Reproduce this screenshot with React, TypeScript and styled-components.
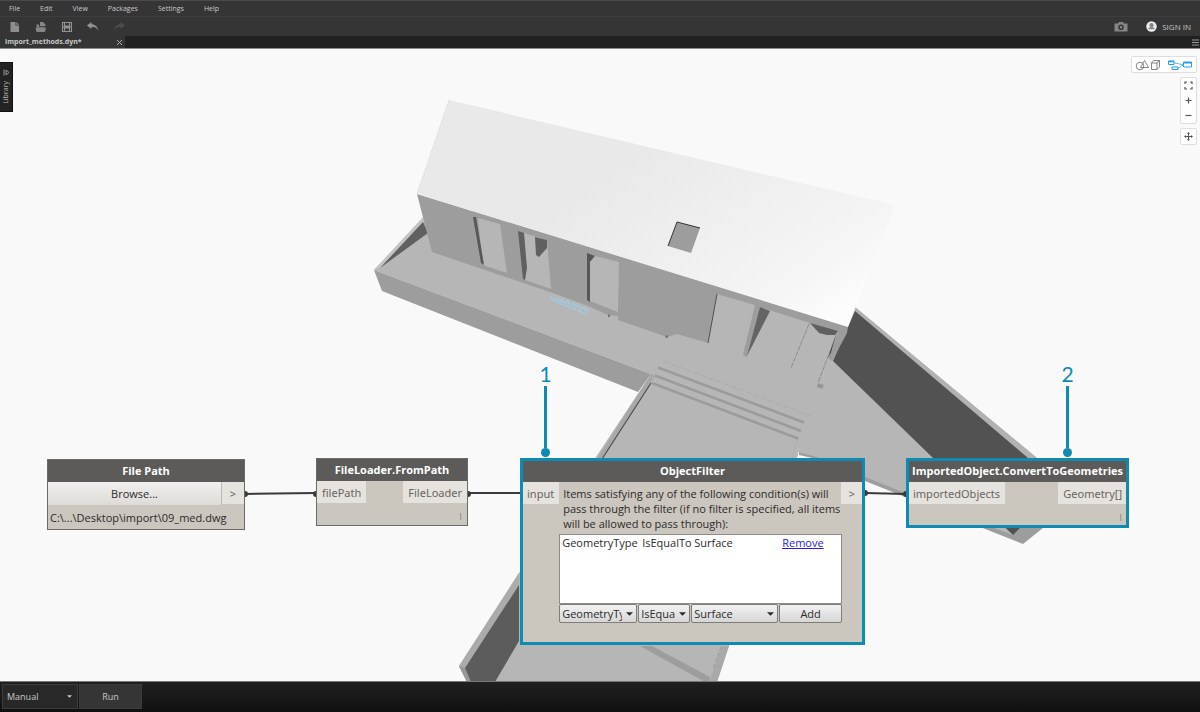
import React from "react";
import styled, { createGlobalStyle } from "styled-components";

const teal = "#0f8bb3";

const GlobalStyle = createGlobalStyle`
  * { box-sizing: border-box; }
  body { margin: 0; background: #f9f9f9; }
  button, input, select { font: inherit; color: inherit; margin: 0; }
`;

const Page = styled.div`
  display: flex;
  flex-direction: column;
  min-height: 100vh;
  font-family: "Open Sans", "Liberation Sans", sans-serif;
  font-size: 7px;
  color: #c8c8c8;
`;

const Header = styled.header`
  background: #353535;
  border-bottom: 1px solid #8b8b8b;
`;

const MenuBar = styled.nav`
  display: flex;
  align-items: center;
  gap: 20px;
  height: 16px;
  padding: 0 9px;
  border-top: 1px solid #4a4a4a;
`;

const MenuItem = styled.button`
  padding: 0;
  border: 0;
  background: none;
  line-height: 10px;
`;

const ToolBar = styled.div`
  display: flex;
  align-items: center;
  justify-content: space-between;
  height: 20px;
  padding: 0 9px;
  border-top: 1px solid #3d3d3d;
`;

const ToolGroup = styled.div<{ $gap: number }>`
  display: flex;
  align-items: center;
  gap: ${(p) => p.$gap}px;
`;

const ToolButton = styled.button`
  display: flex;
  align-items: center;
  gap: 5px;
  padding: 0;
  border: 0;
  background: none;
  font-size: 8px;
  line-height: 10px;
  svg { display: block; }
`;

const TabBar = styled.div`
  display: flex;
  align-items: center;
  justify-content: space-between;
  height: 12px;
  padding-right: 1px;
  background: #212121;
`;

const Tab = styled.div`
  display: flex;
  align-items: center;
  justify-content: space-between;
  width: 125px;
  height: 12px;
  padding: 0 2px 0 5px;
  background: #353535;
  font-weight: 700;
  line-height: 14px;
`;

const Canvas = styled.main`
  position: relative;
  flex: 1;
  min-height: 632px;
  overflow: hidden;
  background: #f9f9f9;
`;

const Scene = styled.svg`
  position: absolute;
  left: 0;
  top: 0;
  display: block;
`;

const LibraryTab = styled.button`
  position: absolute;
  left: 0;
  top: 13px;
  display: flex;
  flex-direction: column;
  align-items: center;
  gap: 5px;
  width: 13px;
  height: 50px;
  padding: 6px 0 0;
  border: 1px solid #111;
  border-left: 0;
  background: #232323;
  color: #b4b4b4;
  svg { display: block; }
`;

const LibraryLabel = styled.span`
  writing-mode: vertical-rl;
  transform: rotate(180deg);
  line-height: 10px;
`;

const ViewControls = styled.div`
  position: absolute;
  right: 3px;
  top: 7px;
  display: flex;
  flex-direction: column;
  align-items: flex-end;
  gap: 4px;
`;

const ControlGroup = styled.div<{ $vertical?: boolean }>`
  display: flex;
  flex-direction: ${(p) => (p.$vertical ? "column" : "row")};
  border: 1px solid #dedede;
  border-radius: 2px;
  background: #fff;
`;

const ControlButton = styled.button<{ $wide?: boolean }>`
  display: grid;
  place-items: center;
  width: ${(p) => (p.$wide ? 32 : 15)}px;
  height: 15px;
  padding: 0;
  border: 0;
  background: none;
  & + & { border-left: ${(p) => (p.$wide ? "1px solid #dedede" : "0")}; }
  svg { display: block; }
`;

const Node = styled.section<{ $x: number; $y: number; $w: number; $h: number; $selected?: boolean }>`
  position: absolute;
  left: ${(p) => p.$x}px;
  top: ${(p) => p.$y}px;
  width: ${(p) => p.$w}px;
  height: ${(p) => p.$h}px;
  border: ${(p) => (p.$selected ? `2px solid ${teal}` : "1px solid #6b6a67")};
  outline: ${(p) => (p.$selected ? `1px solid ${teal}` : "none")};
  outline-offset: -3px;
  background: #cbc6be;
  color: #2b2b2b;
  font-size: 11px;
  line-height: 15px;
`;

const NodeTitle = styled.h2`
  margin: 0;
  height: 22px;
  background: #5d5b59;
  color: #fff;
  font-size: 11px;
  font-weight: 700;
  line-height: 22px;
  text-align: center;
  white-space: nowrap;
`;

const PortRow = styled.div`
  display: flex;
  justify-content: space-between;
  align-items: flex-start;
`;

const Port = styled.div`
  height: 22px;
  padding: 0 5px;
  background: #e6e2de;
  color: #676562;
  font-family: "Noto Sans", sans-serif;
  line-height: 23px;
`;

const OutPort = styled(Port)`
  width: 22px;
  padding: 0;
  text-align: center;
`;

const Browse = styled.button`
  flex: 1;
  height: 23px;
  padding: 0;
  border: 0;
  border-right: 1px solid #bdb8b1;
  background: linear-gradient(#f1f0ef, #dedbd7);
  line-height: 20px;
`;

const FileName = styled.div`
  padding: 5px 2px;
`;

const Lacing = styled.div`
  padding: 4px 4px 0;
  color: #676562;
  font-size: 8px;
  text-align: right;
`;

const FilterBody = styled.div`
  flex: 1;
  padding-top: 4px;
`;

const Hint = styled.p`
  margin: 0 0 3px 4px;
  white-space: nowrap;
`;

const Conditions = styled.ul`
  height: 70px;
  margin: 0 -1px 0 0;
  padding: 0 2px;
  border: 1px solid #8e8c89;
  background: #fff;
  list-style: none;
`;

const Condition = styled.li`
  display: grid;
  grid-template-columns: 80px 52px 88px auto;
`;

const RemoveLink = styled.a`
  color: #2a17e8;
`;

const FilterForm = styled.form`
  display: flex;
  gap: 1px;
  margin-right: -1px;
`;

const Field = styled.label<{ $w: number }>`
  display: grid;
  width: ${(p) => p.$w}px;
  align-items: center;
  > * { grid-area: 1 / 1; }
  svg { justify-self: end; margin-right: 4px; pointer-events: none; }
`;

const FilterSelect = styled.select`
  appearance: none;
  width: 100%;
  height: 19px;
  padding: 0 14px 0 2px;
  border: 1px solid #7f7d7a;
  border-radius: 2px;
  background: linear-gradient(#f3f3f3, #d6d6d6);
  text-overflow: clip;
`;

const AddButton = styled.button`
  flex: 1;
  height: 19px;
  padding: 0;
  border: 1px solid #7f7d7a;
  border-radius: 2px;
  background: linear-gradient(#f3f3f3, #d6d6d6);
`;

const Callout = styled.div<{ $x: number }>`
  position: absolute;
  left: ${(p) => p.$x}px;
  top: 313px;
  display: flex;
  flex-direction: column;
  align-items: center;
  width: 21px;
  color: ${teal};
  font-family: Lato, sans-serif;
  font-size: 21px;
  line-height: 24px;
  &::after {
    content: "";
    width: 9px;
    height: 9px;
    border-radius: 50%;
    background: ${teal};
  }
`;

const Stem = styled.span`
  width: 3px;
  height: 62px;
  background: ${teal};
`;

const Footer = styled.footer`
  display: flex;
  gap: 1px;
  height: 31px;
  padding: 2px 2px 3px;
  border-top: 1px solid #777;
  background: linear-gradient(#202020, #101010);
  font-size: 9px;
`;

const RunMode = styled.label`
  display: grid;
  align-items: center;
  width: 76px;
  > * { grid-area: 1 / 1; }
  svg { justify-self: end; margin-right: 6px; pointer-events: none; }
`;

const RunSelect = styled.select`
  appearance: none;
  width: 100%;
  height: 100%;
  padding: 0 4px;
  border: 1px solid #3c3c3c;
  background: #282828;
`;

const RunButton = styled.button`
  width: 63px;
  padding: 0;
  border: 1px solid #3c3c3c;
  background: #353535;
`;

const Caret = ({ size }: { size: number }) => (
  <svg width={size} height={Math.ceil(size / 2)} viewBox="0 0 8 4" aria-hidden="true">
    <path d="M0 0H8L4 4Z" fill="currentColor" />
  </svg>
);

const House = () => (
  <Scene width="1200" height="633" viewBox="0 49 1200 633" aria-hidden="true">
    <defs>
      <linearGradient id="roof" gradientUnits="userSpaceOnUse" x1="600" y1="180" x2="740" y2="380">
        <stop offset="0" stopColor="#e9e9e9" />
        <stop offset="0.4" stopColor="#efefef" />
        <stop offset="0.8" stopColor="#f5f5f5" />
        <stop offset="1" stopColor="#fcfcfc" />
      </linearGradient>
    </defs>
    {/* ground slab */}
    <path d="M423 218L374 270L651 374L519 573L459 666L467 682H717L729 646L799 452L983 528L1023 543L1080 493L1037 458L855 307L700 290L432 233Z" fill="#b6b6b6" />
    <path d="M374 270L382 291L638 392L651 374Z" fill="#9d9d9d" />
    <path d="M423 217L374 270L380 268L424 222Z" fill="#c4c4c4" />
    <path d="M423 222L380 268L428 233Z" fill="#606060" />
    <path d="M799 452L865 477L983 524L1013 535L1060 487L1084 495L1023 544L983 528L865 481Z" fill="#9d9d9d" />
    <path d="M798 452L799 458H816Z" fill="#f9f9f9" />
    <path d="M799 452L820 458H812L799 455Z" fill="#9d9d9d" />
    {/* retaining wall */}
    <path d="M855 307L1037 458L1080 493L1060 487L855 312Z" fill="#b2b2b2" />
    <path d="M855 311L1028 458L1060 487L1013 535L933 458L833 361Z" fill="#525252" />
    {/* lower terrace */}
    <path d="M519 573L459 666L467 682H471L465 668L519 585Z" fill="#ababab" />
    <path d="M459 666L467 682H471L465 668Z" fill="#979797" />
    <path d="M519 585L465 668L471 682H495L519 641Z" fill="#5c5c5c" />
    <path d="M640 646H652L710 677L709 682H705Z" fill="#9d9d9d" />
    <path d="M729 646L717 682H709L722 646Z" fill="#a9a9a9" />
    <path d="M721 647L713 669" stroke="#888" strokeWidth="0.6" strokeDasharray="4 2" />
    {/* stairs */}
    <path d="M651 374L597 459H602L655 376Z" fill="#a8a8a8" />
    <path d="M651 383L602 459" stroke="#4d4d4d" strokeWidth="1.2" />
    <path d="M658 367.500L804 422.500M655 375.500L801 431M652 383L798 438.500" stroke="#9b9b9b" strokeWidth="2.500" />
    <path d="M663 361L811 416M798 439L792 458" stroke="#a5a5a5" strokeWidth="0.6" strokeDasharray="6 2" fill="none" />
    {/* facade */}
    <path d="M417 194L432 252L550 292L588 306L608 315L618 316V320L667 337L677 334L708 343L717 294L755 305L743 355L747 357L760 307L810 323L838 332L828 358L832 361L847 333L848 326Z" fill="#9d9d9d" />
    <path d="M717 294L708 343" stroke="#505050" strokeWidth="1" />
    <path d="M760 307L770 311L747 356Z" fill="#646464" />
    <path d="M810 323L838 331L835 335L827 335L819 333Z" fill="#606060" />
    <path d="M837 331L831 352L828 358L836 334Z" fill="#222" />
    <path d="M809 324L791 368M835 338L818 383" stroke="#7a7a7a" strokeWidth="0.7" strokeDasharray="5 1" fill="none" />
    <path d="M818 383L824 385L822 389L817 387Z" fill="#969696" />
    <path d="M608 314L610 315V317H608ZM665 336L668 335V338H666Z" fill="#777" />
    {/* openings */}
    <path d="M478 218L500 224L507 273L483 265Z" fill="#b6b6b6" />
    <path d="M473 217L476 217L484 265L481 263Z" fill="#575757" />
    <path d="M524 233L547 240L551 289L525 280Z" fill="#b6b6b6" />
    <path d="M518 231L524 233L527 268L525 280L523 279Z" fill="#606060" />
    <path d="M535 237L547 240V248L539 257L536 255Z" fill="#606060" />
    <path d="M587 253L595 256L590 262V302L587 300Z" fill="#575757" />
    <path d="M595 256L619 262L618 312L590 301V262Z" fill="#b6b6b6" />
    {/* roof */}
    <path d="M449 100L895 205L848 327L417 194Z" fill="url(#roof)" />
    <path d="M449 100L417 194" stroke="#d8d8d8" strokeWidth="0.8" strokeDasharray="3 1" />
    <path d="M677 222L700 228L691 253L668 246Z" fill="#9d9d9d" />
    <path d="M700 228L677 222L668 246" fill="none" stroke="#333" strokeWidth="1" />
    {/* entry steps */}
    <path d="M550 297L553 301L557 297L558 303L562 298L564 305L568 300L569 308L574 302L575 310L579 305L580 312L584 307L586 314L589 309M550 297L589 310M556 302L588 315M551 299L557 303M563 299L560 304M570 302L566 307M577 305L572 309M583 307L579 312" fill="none" stroke="#a3cbe0" strokeWidth="1" />
  </Scene>
);

const Wires = () => (
  <Scene width="1200" height="633" viewBox="0 49 1200 633" aria-hidden="true">
    <g stroke="#3a3a3a" strokeWidth="2" fill="#3a3a3a">
      <path d="M245 494L316 493M468 493H520M865 493L906 494" />
      <g stroke="none">
        <circle cx="245" cy="494" r="3" />
        <circle cx="316" cy="494" r="3" />
        <circle cx="468" cy="494" r="3" />
        <circle cx="865" cy="493" r="3" />
        <circle cx="906" cy="494" r="3" />
      </g>
    </g>
  </Scene>
);

const menus = ["File", "Edit", "View", "Packages", "Settings", "Help"];

const App = () => (
  <Page>
    <GlobalStyle />
    <Header>
      <MenuBar aria-label="Main menu">
        {menus.map((m) => (
          <MenuItem key={m}>{m}</MenuItem>
        ))}
      </MenuBar>
      <ToolBar>
        <ToolGroup $gap={14}>
          <ToolButton aria-label="New">
            <svg width="12" height="12" viewBox="0 0 12 12"><path d="M1.500 1H6.500V4.500H10V11H1.500ZM7.300 1L10 3.700H7.300Z" fill="#8e8e8e" /></svg>
          </ToolButton>
          <ToolButton aria-label="Open">
            <svg width="12" height="12" viewBox="0 0 12 12"><path d="M5 1H8L10.500 3.500V5H5ZM1.500 3.500H4V5.800H9.500V6.500H1.500ZM0.500 6.800H11L10 11H1.500Z" fill="#858585" /></svg>
          </ToolButton>
          <ToolButton aria-label="Save">
            <svg width="12" height="12" viewBox="0 0 12 12"><path d="M1.500 1.500H10.500V10.500H1.500ZM3.500 1.500V5H8.500V1.500M3.500 10.500V7H8.500V10.500M1.500 6H10.500" fill="none" stroke="#929292" strokeWidth="1.100" /></svg>
          </ToolButton>
          <ToolButton aria-label="Undo">
            <svg width="12" height="12" viewBox="0 0 12 12"><path d="M0 4.500L4.500 1V3.200C8 3.200 10.500 5.500 11.500 9.500C9.500 6.700 7.500 5.700 4.500 5.700V8Z" fill="#959595" /></svg>
          </ToolButton>
          <ToolButton aria-label="Redo">
            <svg width="12" height="12" viewBox="0 0 12 12"><path d="M12 4.500L7.500 1V3.200C4 3.200 1.500 5.500 0.500 9.500C2.500 6.700 4.500 5.700 7.500 5.700V8Z" fill="#4c4c4c" /></svg>
          </ToolButton>
        </ToolGroup>
        <ToolGroup $gap={18}>
          <ToolButton aria-label="Export image">
            <svg width="14" height="12" viewBox="0 0 14 12"><path fillRule="evenodd" d="M0.500 2.500H4L5 1H9L10 2.500H13.500V10.500H0.500ZM7 3.500A2.800 2.800 0 1 0 7 9.100A2.800 2.800 0 1 0 7 3.500ZM7 5A1.300 1.300 0 1 1 7 7.600A1.300 1.300 0 1 1 7 5Z" fill="#868686" /></svg>
          </ToolButton>
          <ToolButton>
            <svg width="11" height="11" viewBox="0 0 11 11"><circle cx="5.500" cy="5.500" r="5.200" fill="#eee" /><path d="M5.500 2A1.900 2.200 0 0 1 6.500 6.200C8 6.600 8.800 7 8.800 8.300H2.200C2.200 7 3 6.600 4.500 6.200A1.900 2.200 0 0 1 5.500 2Z" fill="#858585" /></svg>
            SIGN IN
          </ToolButton>
        </ToolGroup>
      </ToolBar>
      <TabBar>
        <Tab>
          import_methods.dyn*
          <ToolButton aria-label="Close tab">
            <svg width="7" height="7" viewBox="0 0 7 7"><path d="M1 1L6 6M6 1L1 6" stroke="#aaa" strokeWidth="1" /></svg>
          </ToolButton>
        </Tab>
        <ToolButton aria-label="Tab list">
          <svg width="7" height="7" viewBox="0 0 7 7"><path d="M0 1H7M0 3.500H7M0 6H7" stroke="#999" strokeWidth="1" /></svg>
        </ToolButton>
      </TabBar>
    </Header>

    <Canvas>
      <House />
      <Wires />

      <Node $x={47} $y={410} $w={198} $h={71}>
        <NodeTitle>File Path</NodeTitle>
        <PortRow>
          <Browse>Browse...</Browse>
          <OutPort>&gt;</OutPort>
        </PortRow>
        <FileName>C:\...\Desktop\import\09_med.dwg</FileName>
      </Node>

      <Node $x={316} $y={409} $w={152} $h={68}>
        <NodeTitle>FileLoader.FromPath</NodeTitle>
        <PortRow>
          <Port>filePath</Port>
          <Port>FileLoader</Port>
        </PortRow>
        <Lacing>|</Lacing>
      </Node>

      <Node $x={520} $y={409} $w={345} $h={187} $selected>
        <NodeTitle>ObjectFilter</NodeTitle>
        <PortRow>
          <Port>input</Port>
          <FilterBody>
            <Hint>
              Items satisfying any of the following condition(s) will
              <br />
              pass through the filter (if no filter is specified, all items
              <br />
              will be allowed to pass through):
            </Hint>
            <Conditions>
              <Condition>
                <span>GeometryType</span>
                <span>IsEqualTo</span>
                <span>Surface</span>
                <RemoveLink href="#remove">Remove</RemoveLink>
              </Condition>
            </Conditions>
            <FilterForm onSubmit={(e) => e.preventDefault()}>
              <Field $w={78}>
                <FilterSelect aria-label="Property"><option>GeometryType</option></FilterSelect>
                <Caret size={7} />
              </Field>
              <Field $w={52}>
                <FilterSelect aria-label="Operator"><option>IsEqualTo</option></FilterSelect>
                <Caret size={7} />
              </Field>
              <Field $w={87}>
                <FilterSelect aria-label="Value"><option>Surface</option></FilterSelect>
                <Caret size={7} />
              </Field>
              <AddButton>Add</AddButton>
            </FilterForm>
          </FilterBody>
          <OutPort>&gt;</OutPort>
        </PortRow>
      </Node>

      <Node $x={906} $y={409} $w={223} $h={70} $selected>
        <NodeTitle>ImportedObject.ConvertToGeometries</NodeTitle>
        <PortRow>
          <Port>importedObjects</Port>
          <Port>Geometry[]</Port>
        </PortRow>
        <Lacing>|</Lacing>
      </Node>

      <Callout $x={535}>1<Stem /></Callout>
      <Callout $x={1057}>2<Stem /></Callout>

      <LibraryTab>
        <svg width="7" height="7" viewBox="0 0 7 7"><path d="M1 0.500V6.500M3 1L6 3.500L3 6Z" fill="none" stroke="#999" strokeWidth="1" /></svg>
        <LibraryLabel>Library</LibraryLabel>
      </LibraryTab>

      <ViewControls>
        <ControlGroup>
          <ControlButton $wide aria-label="Geometry view">
            <svg width="26" height="12" viewBox="0 0 26 12" fill="none" stroke="#777" strokeWidth="0.900">
              <circle cx="5" cy="7" r="3.800" />
              <path d="M9.500 1.500L13.500 8.500H5.500ZM16.500 4H22V10.500H16.500ZM16.500 4L18.500 1.500H24.500L22 4M24.500 1.500V8L22 10.500" />
            </svg>
          </ControlButton>
          <ControlButton $wide aria-label="Graph view">
            <svg width="26" height="12" viewBox="0 0 26 12" fill="none" stroke="#2a9df0">
              <path d="M1.500 2H7V5.500H1.500ZM16.500 3H24.500V8H16.500ZM5 8H11V10.500H5Z" />
              <path d="M1.500 2.500H7M16.500 3.700H24.500" strokeWidth="1.500" />
              <path d="M7 4C11 4 12 5.500 16.500 5.500M11 9C14 9 13 6 16.500 6" strokeWidth="0.800" />
            </svg>
          </ControlButton>
        </ControlGroup>
        <ControlGroup $vertical>
          <ControlButton aria-label="Zoom to fit">
            <svg width="9" height="9" viewBox="0 0 9 9"><path d="M1 3V1H3M6 1H8V3M8 6V8H6M3 8H1V6" fill="none" stroke="#555" strokeWidth="1.200" /></svg>
          </ControlButton>
          <ControlButton aria-label="Zoom in">
            <svg width="7" height="7" viewBox="0 0 7 7"><path d="M0.500 3.500H6.500M3.500 0.500V6.500" stroke="#555" strokeWidth="1.200" /></svg>
          </ControlButton>
          <ControlButton aria-label="Zoom out">
            <svg width="7" height="7" viewBox="0 0 7 7"><path d="M0.500 3.500H6.500" stroke="#555" strokeWidth="1.200" /></svg>
          </ControlButton>
        </ControlGroup>
        <ControlGroup $vertical>
          <ControlButton aria-label="Pan">
            <svg width="9" height="9" viewBox="0 0 9 9"><path d="M1 4.500H8M4.500 1V8" stroke="#555" strokeWidth="1" /><path d="M4.500 0L6 2H3ZM4.500 9L6 7H3ZM0 4.500L2 3V6ZM9 4.500L7 3V6Z" fill="#555" /></svg>
          </ControlButton>
        </ControlGroup>
      </ViewControls>
    </Canvas>

    <Footer>
      <RunMode>
        <RunSelect aria-label="Run mode"><option>Manual</option></RunSelect>
        <Caret size={5} />
      </RunMode>
      <RunButton>Run</RunButton>
    </Footer>
  </Page>
);

export default App;
